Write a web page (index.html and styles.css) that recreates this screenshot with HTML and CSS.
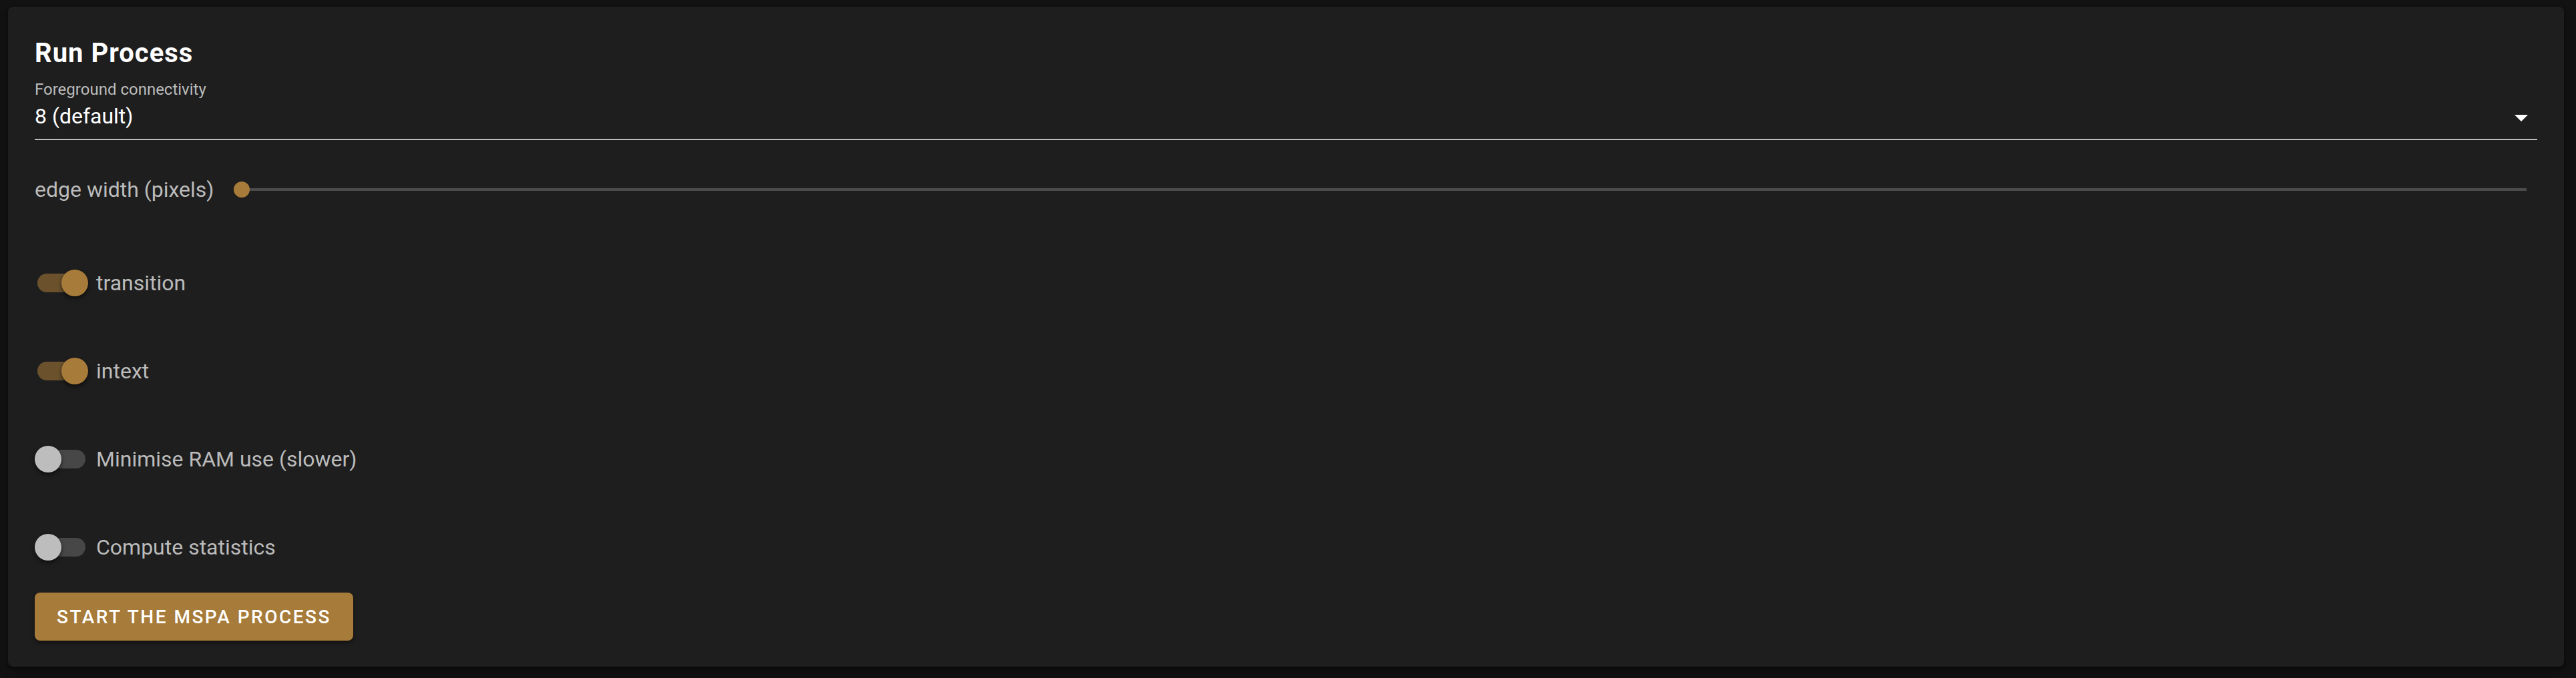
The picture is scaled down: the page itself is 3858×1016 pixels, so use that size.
FILE: index.html
```html
<!DOCTYPE html>
<html lang="en">
<head>
<meta charset="utf-8">
<title>Run Process</title>
<link rel="stylesheet" href="styles.css">
</head>
<body>
<div class="card">
  <h2 class="card-title">Run Process</h2>

  <div class="select">
    <div class="select-label">Foreground connectivity</div>
    <div class="select-row">
      <span class="select-value">8 (default)</span>
      <svg class="select-icon" width="48" height="48" viewBox="0 0 48 48"><path d="M14 20 L34 20 L24 30 Z" fill="#ffffff"/></svg>
    </div>
  </div>

  <div class="slider-row">
    <span class="slider-label">edge width (pixels)</span>
    <div class="slider">
      <div class="slider-track"></div>
      <div class="slider-thumb"></div>
    </div>
  </div>

  <div class="switch-row first">
    <div class="switch on"><div class="switch-track"></div><div class="switch-thumb"></div></div>
    <span class="switch-label">transition</span>
  </div>
  <div class="switch-row">
    <div class="switch on"><div class="switch-track"></div><div class="switch-thumb"></div></div>
    <span class="switch-label">intext</span>
  </div>
  <div class="switch-row">
    <div class="switch"><div class="switch-track"></div><div class="switch-thumb"></div></div>
    <span class="switch-label">Minimise RAM use (slower)</span>
  </div>
  <div class="switch-row">
    <div class="switch"><div class="switch-track"></div><div class="switch-thumb"></div></div>
    <span class="switch-label">Compute statistics</span>
  </div>

  <div class="actions">
    <button class="btn">Start the MSPA process</button>
  </div>
</div>
</body>
</html>
```

FILE: styles.css
```css
html, body {
  margin: 0;
  padding: 0;
  background: #121212;
  height: 1016px;
  overflow: hidden;
}

body {
  font-family: Roboto, "Noto Sans", sans-serif;
  color: #ffffff;
}

.card {
  margin: 10px 18px 0 12px;
  height: 989px;
  box-sizing: border-box;
  padding: 46px 40px 0 40px;
  background: #1e1e1e;
  border-radius: 8px;
  box-shadow: 0 6px 12px rgba(0, 0, 0, 0.35), 0 2px 4px rgba(0, 0, 0, 0.25);
  display: flex;
  flex-direction: column;
}

.card-title {
  margin: 0;
  font-size: 40px;
  line-height: 48px;
  font-weight: 700;
  letter-spacing: 1px;
  color: #ffffff;
}

.select {
  margin-top: 18px;
  border-bottom: 2px solid #bdbdbd;
}

.select-label {
  font-size: 24px;
  line-height: 24px;
  color: #bbbbbb;
}

.select-row {
  margin-top: 6px;
  height: 56px;
  display: flex;
  align-items: flex-start;
  justify-content: space-between;
}

.select-value {
  margin-top: 6px;
  font-size: 32px;
  line-height: 32px;
  color: #ffffff;
}

.select-icon {
  display: block;
}

.slider-row {
  margin-top: 50px;
  height: 48px;
  display: flex;
  align-items: center;
}

.slider-label {
  font-size: 32px;
  line-height: 32px;
  color: #bbbbbb;
  margin-right: 24px;
  white-space: nowrap;
}

.slider {
  position: relative;
  flex: 1;
  height: 48px;
  margin: 0 16px 0 18px;
  display: flex;
  align-items: center;
}

.slider-track {
  flex: 1;
  height: 4px;
  background: #4b4b4b;
}

.slider-thumb {
  position: absolute;
  left: -12px;
  top: 12px;
  width: 24px;
  height: 24px;
  border-radius: 50%;
  background: #a77b39;
}

.switch-row {
  margin-top: 84px;
  height: 48px;
  display: flex;
  align-items: center;
}

.switch-row.first {
  margin-top: 92px;
}

.switch {
  position: relative;
  width: 76px;
  height: 48px;
  margin-right: 16px;
  flex: none;
}

.switch-track {
  position: absolute;
  left: 4px;
  top: 10px;
  width: 72px;
  height: 28px;
  border-radius: 14px;
  background: #474747;
}

.switch-thumb {
  position: absolute;
  left: 0;
  top: 4px;
  width: 40px;
  height: 40px;
  border-radius: 50%;
  background: #bdbdbd;
  box-shadow: 0 4px 6px rgba(0, 0, 0, 0.35), 0 2px 4px rgba(0, 0, 0, 0.25);
}

.switch.on .switch-track {
  background: #6b522d;
}

.switch.on .switch-thumb {
  left: 40px;
  background: #a77b39;
}

.switch-label {
  font-size: 32px;
  line-height: 32px;
  color: #bbbbbb;
}

.actions {
  margin-top: 44px;
  display: flex;
}

.btn {
  height: 72px;
  padding: 0 33px;
  border: none;
  border-radius: 8px;
  background: #a77b39;
  color: #ffffff;
  font-family: Roboto, "Noto Sans", sans-serif;
  font-size: 28px;
  font-weight: 500;
  letter-spacing: 2.5px;
  text-transform: uppercase;
  box-shadow: 0 4px 6px rgba(0, 0, 0, 0.3), 0 2px 3px rgba(0, 0, 0, 0.2);
  cursor: pointer;
}
```
